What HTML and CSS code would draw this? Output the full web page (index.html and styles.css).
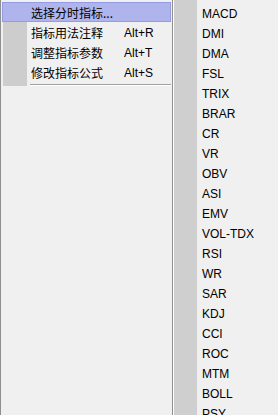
FILE: index.html
```html
<!DOCTYPE html>
<html lang="zh">
<head>
  <meta charset="UTF-8" />
  <title>指标菜单</title>
  <link rel="stylesheet" href="styles.css">
</head>
<body>
  <div class="screen">
    <!-- 左侧菜单 -->
    <div class="menu-left">
      <div class="menu-items">
        <div class="item active"><span class="label">选择分时指标...</span></div>
        <div class="item"><span class="label">指标用法注释</span><span class="key">Alt+R</span></div>
        <div class="item"><span class="label">调整指标参数</span><span class="key">Alt+T</span></div>
        <div class="item"><span class="label">修改指标公式</span><span class="key">Alt+S</span></div>
        <div class="separator"></div>
      </div>
    </div>

    <!-- 右侧指标列表 -->
    <div class="menu-right">
      <div class="sub">MACD</div>
      <div class="sub">DMI</div>
      <div class="sub">DMA</div>
      <div class="sub">FSL</div>
      <div class="sub">TRIX</div>
      <div class="sub">BRAR</div>
      <div class="sub">CR</div>
      <div class="sub">VR</div>
      <div class="sub">OBV</div>
      <div class="sub">ASI</div>
      <div class="sub">EMV</div>
      <div class="sub">VOL-TDX</div>
      <div class="sub">RSI</div>
      <div class="sub">WR</div>
      <div class="sub">SAR</div>
      <div class="sub">KDJ</div>
      <div class="sub">CCI</div>
      <div class="sub">ROC</div>
      <div class="sub">MTM</div>
      <div class="sub">BOLL</div>
      <div class="sub">PSY</div>
    </div>
  </div>
</body>
</html>
```

FILE: styles.css
```css
body {
  margin: 0;
  background: #f0f0f0;
  font-family: 'Liberation Sans', 'Noto Sans CJK SC', sans-serif;
  font-size: 12px;
  color: #000;
  overflow: hidden;
}

.screen {
  display: flex;
  height: 415px;
}

.menu-left {
  box-sizing: border-box;
  width: 173px;
  height: 100%;
  border-left: 1px solid #8f8f8f;
  border-right: 1px solid #8f8f8f;
  padding: 2px 1px 0 1px;
  background: #f0f0f0;
}

.menu-items {
  background: linear-gradient(to right, #f0f0f0 0, #f0f0f0 1px, #cdcdcd 1px, #cdcdcd 25px, #f0f0f0 25px);
}

.item {
  display: flex;
  align-items: center;
  box-sizing: border-box;
  height: 20px;
  padding-left: 29px;
  padding-top: 1px;
}

.item.active {
  background: #afb4ec;
  border: 1px solid #959be0;
  padding-left: 28px;
}

.label {
  font-family: 'Noto Sans CJK SC', sans-serif;
  width: 93px;
}

.key {
  font-family: 'Liberation Sans', sans-serif;
}

.separator {
  margin: 2px 0 0 28px;
  height: 1px;
  background: #a0a0a0;
  border-bottom: 1px solid #ffffff;
  box-shadow: 0 1px 0 #f0f0f0;
}

.menu-right {
  flex: 1;
  box-sizing: border-box;
  height: 100%;
  padding-top: 4px;
  border-left: 1px solid #ffffff;
  background: linear-gradient(to right, #cfcfcf 0, #cfcfcf 23px, #f0f0f0 23px);
}

.sub {
  height: 20px;
  line-height: 20px;
  padding-left: 28px;
}
```
